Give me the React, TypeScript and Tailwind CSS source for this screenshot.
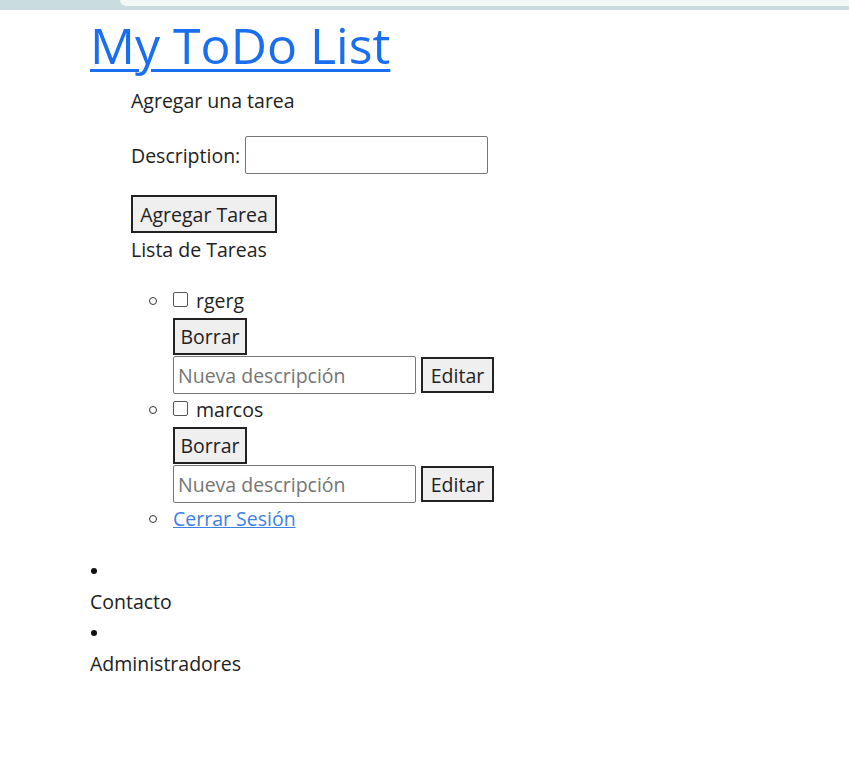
import { useState } from "react";

interface Task {
  id: number;
  description: string;
  done: boolean;
}

// small hollow bullet used by the nested list
function Circle() {
  return <span className="block w-[8px] h-[8px] rounded-full border-[1.5px] border-[#333]" />;
}

function Disc() {
  return <span className="block w-[6px] h-[6px] rounded-full bg-[#111]" />;
}

export default function App() {
  const [tasks, setTasks] = useState<Task[]>([
    { id: 1, description: "rgerg", done: false },
    { id: 2, description: "marcos", done: false },
  ]);
  const [desc, setDesc] = useState("");

  const toggle = (id: number) =>
    setTasks((t) => t.map((x) => (x.id === id ? { ...x, done: !x.done } : x)));

  return (
    <div className="min-h-screen bg-white font-['Open_Sans',sans-serif] text-[19.5px] leading-[31px] text-[#222]">
      {/* browser chrome strip */}
      <div className="flex h-[10px] bg-[#c9dde1]">
        <div className="w-[120px]" />
        <div className="flex-1 h-[6px] bg-[#f4f7f8] rounded-bl-[10px]" />
      </div>

      <div className="pl-[90px]">
        <h1 className="h-[75px] text-[50px] leading-[70px] font-medium">
          <a href="#" className="text-[#1a6ff0] underline decoration-[3px] underline-offset-[5px]">
            My ToDo List
          </a>
        </h1>

        <div className="pl-[41px]">
          <p>Agregar una tarea</p>
          <div className="mt-[20px] flex h-[38px] items-center gap-[5px]">
            <label>Description:</label>
            <input
              value={desc}
              onChange={(e) => setDesc(e.target.value)}
              className="w-[243px] h-[38px] border border-[#767676] rounded-[2px] px-1 outline-none"
            />
          </div>
          <button className="mt-[21px] block w-[146px] h-[38px] border-2 border-[#222] bg-[#efefef] text-center">
            Agregar Tarea
          </button>
          <p className="mt-[1px]">Lista de Tareas</p>

          <ul className="mt-[20px]">
            {tasks.map((t) => (
              <li key={t.id} className="flex">
                <div className="w-[42px] h-[31px] flex items-center justify-end pr-[16px]">
                  <Circle />
                </div>
                <div>
                  <div className="flex items-center h-[31px] gap-[8px]">
                    <input
                      type="checkbox"
                      checked={t.done}
                      onChange={() => toggle(t.id)}
                      className="appearance-none w-[15px] h-[15px] -mt-[2px] border border-[#555] rounded-[2px] bg-white checked:bg-[#1a6ff0]"
                    />
                    <span>{t.description}</span>
                  </div>
                  <button className="mt-[2px] block w-[74px] h-[37px] border-2 border-[#222] bg-[#efefef] text-center">
                    Borrar
                  </button>
                  <div className="mt-[1px] flex items-center h-[38px] gap-[5px]">
                    <input
                      placeholder="Nueva descripción"
                      className="w-[243px] h-[38px] border border-[#767676] rounded-[2px] px-[4px] outline-none placeholder:text-[#757575]"
                    />
                    <button className="w-[73px] h-[36px] border-2 border-[#222] bg-[#efefef] text-center">
                      Editar
                    </button>
                  </div>
                </div>
              </li>
            ))}
            <li className="flex">
              <div className="w-[42px] h-[31px] flex items-center justify-end pr-[16px]">
                <Circle />
              </div>
              <a href="#" className="text-[#3d82e0] underline">
                Cerrar Sesión
              </a>
            </li>
          </ul>
        </div>

        <ul className="mt-[21px]">
          <li>
            <div className="h-[31px] flex items-center pl-[1px]">
              <Disc />
            </div>
            <div>Contacto</div>
          </li>
          <li>
            <div className="h-[31px] flex items-center pl-[1px]">
              <Disc />
            </div>
            <div>Administradores</div>
          </li>
        </ul>
      </div>
    </div>
  );
}
